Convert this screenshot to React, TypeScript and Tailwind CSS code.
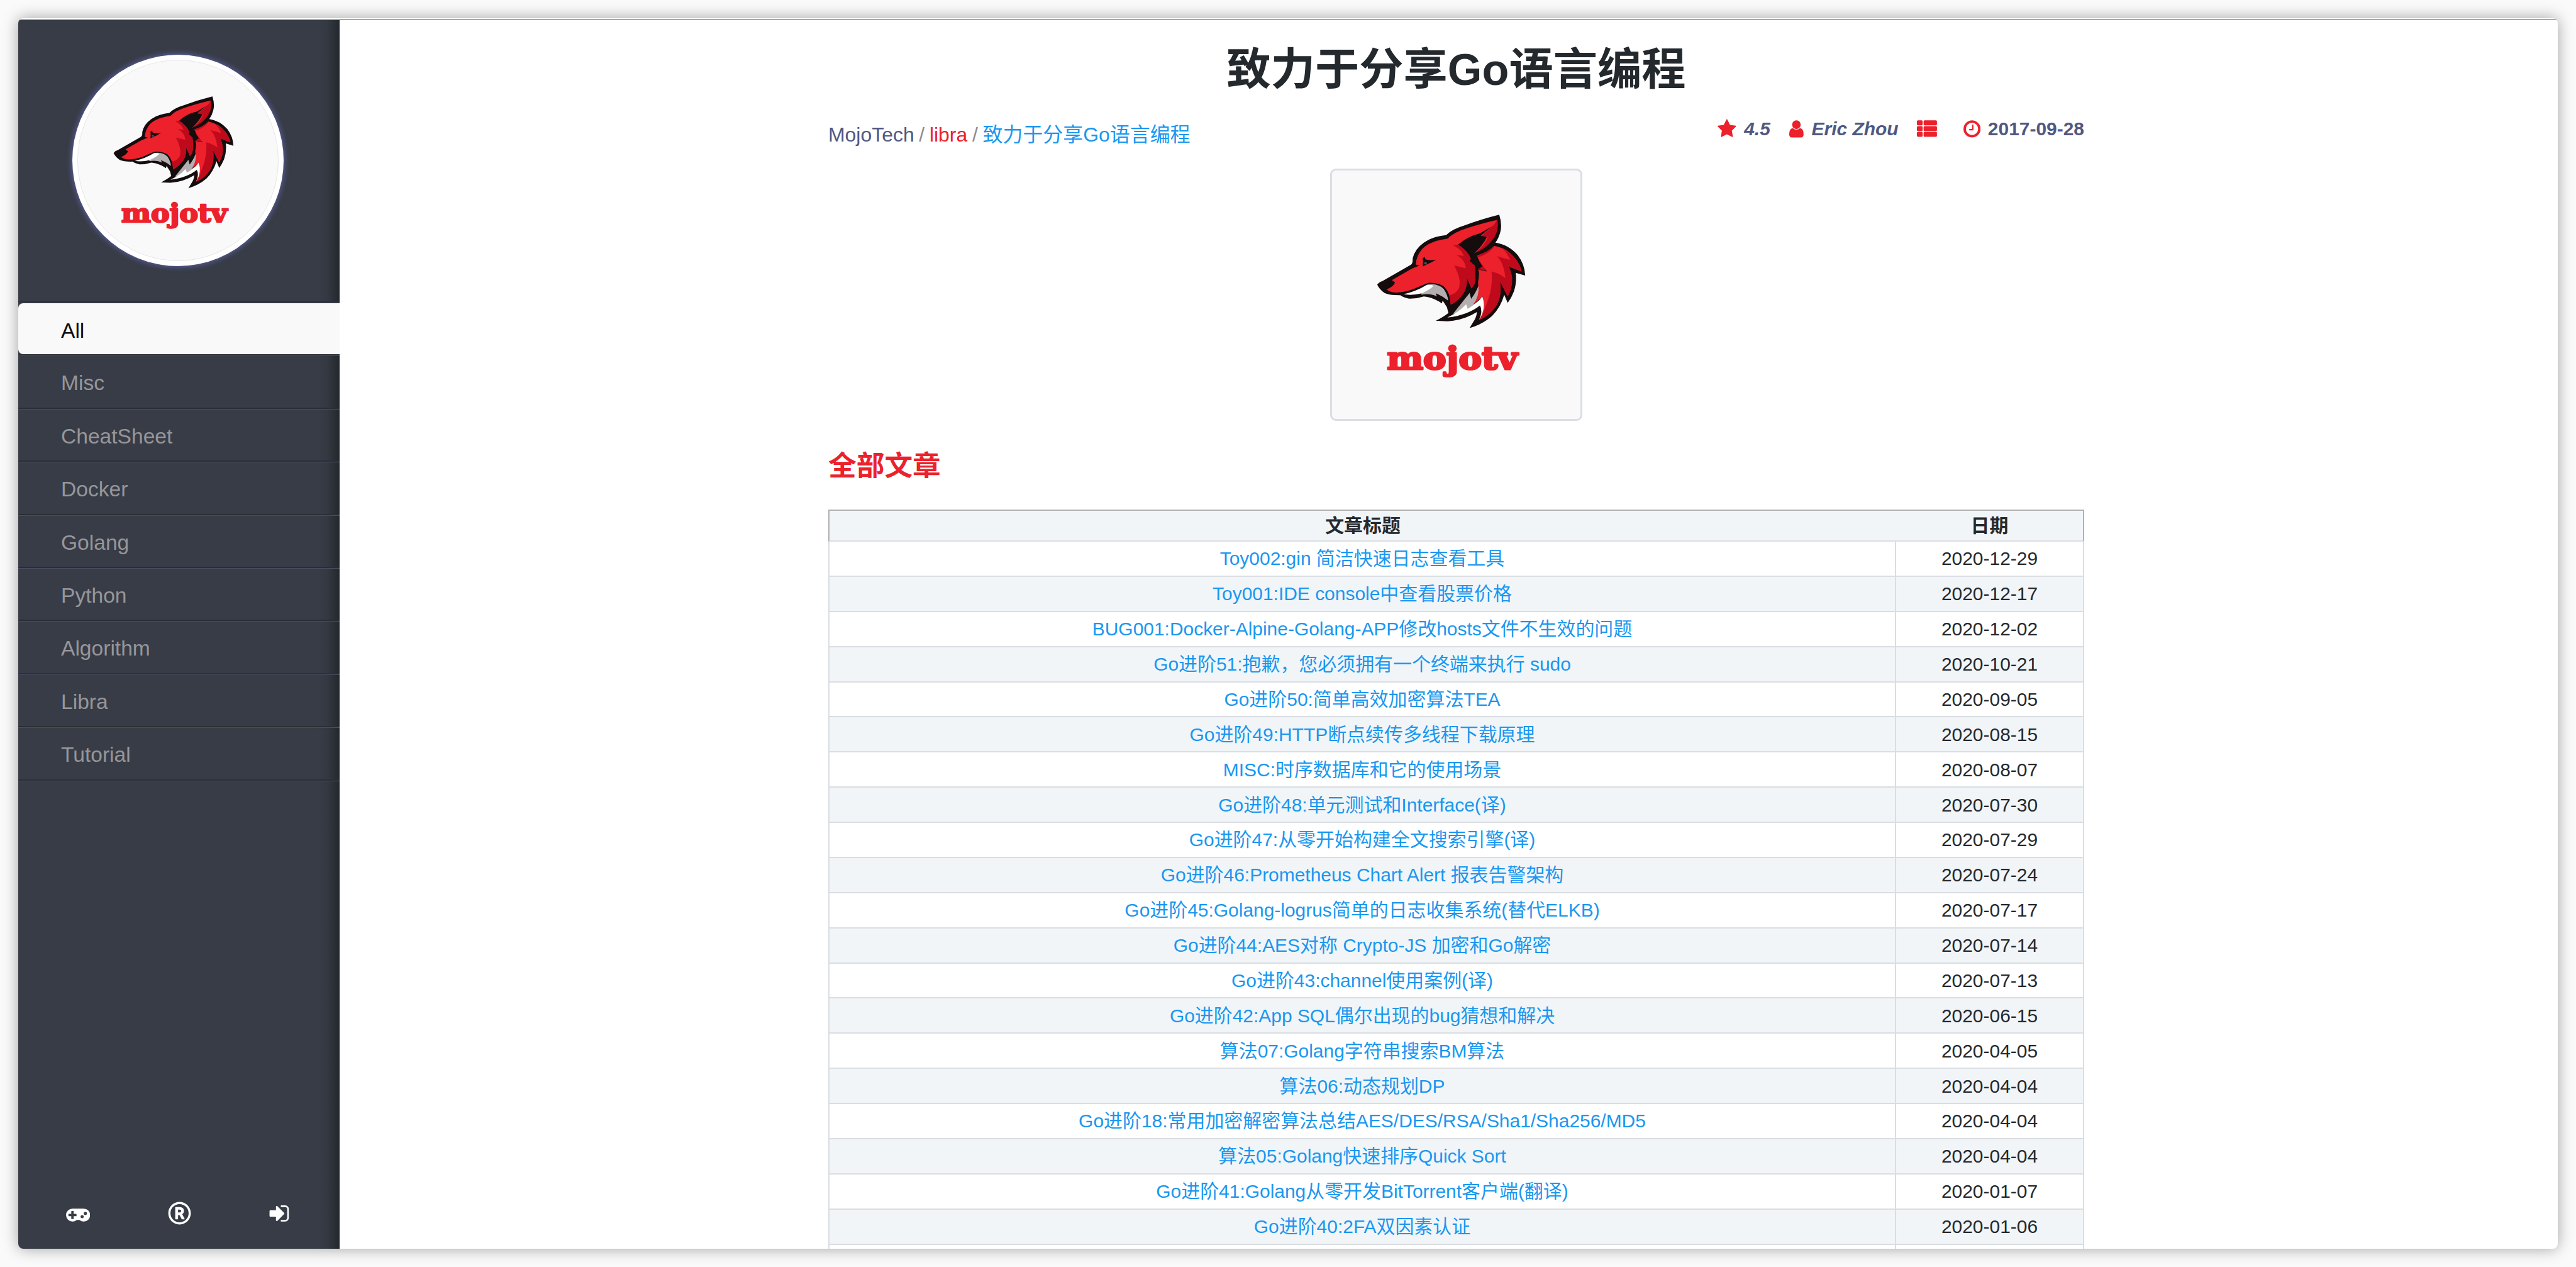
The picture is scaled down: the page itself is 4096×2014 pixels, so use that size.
import React from "react";
import { FaRegRegistered } from "react-icons/fa";

const NAV = ["All", "Misc", "CheatSheet", "Docker", "Golang", "Python", "Algorithm", "Libra", "Tutorial"];

const ARTICLES: [string, string][] = [
  ["Toy002:gin 简洁快速日志查看工具", "2020-12-29"],
  ["Toy001:IDE console中查看股票价格", "2020-12-17"],
  ["BUG001:Docker-Alpine-Golang-APP修改hosts文件不生效的问题", "2020-12-02"],
  ["Go进阶51:抱歉，您必须拥有一个终端来执行 sudo", "2020-10-21"],
  ["Go进阶50:简单高效加密算法TEA", "2020-09-05"],
  ["Go进阶49:HTTP断点续传多线程下载原理", "2020-08-15"],
  ["MISC:时序数据库和它的使用场景", "2020-08-07"],
  ["Go进阶48:单元测试和Interface(译)", "2020-07-30"],
  ["Go进阶47:从零开始构建全文搜索引擎(译)", "2020-07-29"],
  ["Go进阶46:Prometheus Chart Alert 报表告警架构", "2020-07-24"],
  ["Go进阶45:Golang-logrus简单的日志收集系统(替代ELKB)", "2020-07-17"],
  ["Go进阶44:AES对称 Crypto-JS 加密和Go解密", "2020-07-14"],
  ["Go进阶43:channel使用案例(译)", "2020-07-13"],
  ["Go进阶42:App SQL偶尔出现的bug猜想和解决", "2020-06-15"],
  ["算法07:Golang字符串搜索BM算法", "2020-04-05"],
  ["算法06:动态规划DP", "2020-04-04"],
  ["Go进阶18:常用加密解密算法总结AES/DES/RSA/Sha1/Sha256/MD5", "2020-04-04"],
  ["算法05:Golang快速排序Quick Sort", "2020-04-04"],
  ["Go进阶41:Golang从零开发BitTorrent客户端(翻译)", "2020-01-07"],
  ["Go进阶40:2FA双因素认证", "2020-01-06"],
  ["", ""],
];

function Glyph({ d, box, className }: { d: string; box: string; className: string }) {
  return (
    <svg viewBox={box} className={className} fill="currentColor" aria-hidden="true">
      <path d={d} />
    </svg>
  );
}

const STAR =
  "M1728 647q0 22-26 48l-363 354 86 500q1 7 1 20 0 21-10.5 35.5t-30.5 14.5q-19 0-40-12l-449-236-449 236q-22 12-40 12-21 0-31.500-14.500t-10.500-35.500q0-6 2-20l86-500-364-354q-25-27-25-48 0-37 56-46l502-73 225-455q19-41 49-41t49 41l225 455 502 73q56 9 56 46z";
const USER =
  "M1536 1399q0 109-62.5 187t-150.5 78h-854q-88 0-150.500-78t-62.500-187q0-85 8.500-160.500t31.500-152 58.500-131 94-89 134.500-34.500q131 128 313 128t313-128q76 0 134.500 34.500t94 89 58.500 131 31.500 152 8.500 160.500zm-256-887q0 159-112.500 271.500t-271.500 112.500-271.500-112.500-112.500-271.500 112.500-271.500 271.500-112.500 271.500 112.500 112.500 271.500z";
const CLOCK =
  "M1024 544v448q0 14-9 23t-23 9h-320q-14 0-23-9t-9-23v-64q0-14 9-23t23-9h224v-352q0-14 9-23t23-9h64q14 0 23 9t9 23zm416 352q0-148-73-273t-198-198-273-73-273 73-198 198-73 273 73 273 198 198 273 73 273-73 198-198 73-273zm224 0q0 209-103 385.500t-279.500 279.500-385.500 103-385.500-103-279.500-279.500-103-385.500 103-385.500 279.500-279.500 385.500-103 385.500 103 279.500 279.500 103 385.500z";
const GAMEPAD =
  "M832 1088v-128q0-14-9-23t-23-9h-192v-192q0-14-9-23t-23-9h-128q-14 0-23 9t-9 23v192h-192q-14 0-23 9t-9 23v128q0 14 9 23t23 9h192v192q0 14 9 23t23 9h128q14 0 23-9t9-23v-192h192q14 0 23-9t9-23zm576 64q0-53-37.500-90.500t-90.500-37.500-90.500 37.500-37.500 90.500 37.500 90.500 90.500 37.500 90.500-37.500 37.500-90.500zm256-256q0-53-37.500-90.500t-90.500-37.500-90.500 37.500-37.500 90.500 37.500 90.500 90.500 37.500 90.500-37.500 37.500-90.500zm256 128q0 212-150 362t-362 150q-192 0-338-128h-220q-146 128-338 128-212 0-362-150t-150-362 150-362 362-150h896q212 0 362 150t150 362z";
const SIGN_IN =
  "M1312 896q0 26-19 45l-544 544q-19 19-45 19t-45-19-19-45v-288h-448q-26 0-45-19t-19-45v-384q0-26 19-45t45-19h448v-288q0-26 19-45t45-19 45 19l544 544q19 19 19 45zm352-352v704q0 119-84.500 203.500t-203.500 84.500h-320q-13 0-22.500-9.500t-9.500-22.500q0-4-1-20t-.5-26.500 3-23.500 10-19.500 20.500-6.500h320q66 0 113-47t47-113v-704q0-66-47-113t-113-47h-312l-11.500-1-11.500-3-8-5.500-7-9-2-13.500q0-4-1-20t-.5-26.500 3-23.500 10-19.500 20.500-6.500h320q119 0 203.500 84.500t84.500 203.500z";

function ThList({ className }: { className: string }) {
  return (
    <svg viewBox="0 0 1792 1792" className={className} fill="currentColor" aria-hidden="true">
      {[128, 640, 1152].map((y) => (
        <React.Fragment key={y}>
          <rect x="0" y={y} width="512" height="448" rx="96" />
          <rect x="600" y={y} width="1192" height="448" rx="96" />
        </React.Fragment>
      ))}
    </svg>
  );
}

/* Fox head mascot with the wordmark below it */
function FoxLogo({ box, className }: { box: string; className: string }) {
  return (
    <svg viewBox={box} className={className}>
      <g transform="scale(0.38268 0.34438)">
        <path
          fill="#140c0d"
          d="M376 716 Q386 700 402 696 L550 602 Q562 594 560 566 Q570 512 618 474 Q664 438 734 430 Q764 396 830 374 Q916 338 1010 312 Q1026 368 1016 410 Q1008 446 990 474 Q1060 486 1106 546 Q1142 598 1145 664 L1096 648 Q1102 704 1086 756 Q1074 792 1054 822 L1036 774 Q1018 846 972 898 Q922 946 856 967 L876 930 Q892 904 894 874 Q824 922 742 928 L680 925 Q722 902 746 880 L738 846 L716 808 L712 824 Q660 786 618 784 Q580 798 542 797 Q512 790 496 777 Q440 778 414 764 Q386 742 376 716Z"
        />
        <path
          fill="#ec212b"
          d="M424 744 Q462 728 468 704 L452 690 L556 624 L596 606 L576 600 Q580 548 608 512 Q650 464 742 450 Q772 414 842 390 Q926 360 1000 342 Q1008 400 986 432 Q950 500 880 535 L798 486 Q846 526 862 566 L856 580 L882 606 Q892 680 880 716 L866 738 L842 676 Q846 750 806 790 Q786 818 758 832 Q756 762 722 726 Q690 704 640 706 Q604 722 560 744 Q516 760 478 762 Q442 762 424 744Z"
        />
        <path
          fill="#bf0a1c"
          d="M798 486 Q850 524 862 566 L856 580 L882 606 Q892 680 880 716 L866 738 L842 676 Q846 750 806 790 Q786 818 758 832 Q756 790 748 776 Q780 776 800 738 Q816 690 776 606 L836 622 Q834 574 788 546 L826 550 Q816 514 770 488Z"
        />
        <path fill="#bf0a1c" d="M998 343 Q986 372 974 378 L918 436 L950 438 Q940 490 880 535 Q950 506 986 440 Q1010 390 998 343Z" />
        <path fill="#140c0d" d="M796 486 Q846 436 910 420 L968 382 L914 434 L946 440 Q926 488 880 535 L872 560 Q840 506 796 486Z" />
        <path fill="#140c0d" d="M442 706 L468 700 L462 712 L426 738 L404 726Z" />
        <path fill="#140c0d" d="M624 556 L626 570 Q656 578 682 572 Q656 590 636 598 L612 612 Q616 580 612 564Z" />
        <circle cx="627" cy="593" r="7" fill="#4a525c" />
        <path
          fill="#ec212b"
          d="M894 548 Q950 530 984 492 Q1052 506 1092 564 Q1120 602 1126 640 L1060 612 Q1088 676 1070 744 L1054 784 L1014 696 Q1028 798 980 860 Q946 904 904 920 Q936 850 924 784 L874 832 Q906 764 900 700 Q910 650 900 628 L946 640 L908 584Z"
        />
        <path
          fill="#bf0a1c"
          d="M998 552 L1066 574 Q1056 540 1030 512 Q1080 540 1096 572 Q1120 602 1126 640 L1060 612 Q1088 676 1070 744 L1054 784 L1014 696 Q1028 798 980 860 Q946 904 904 920 Q930 884 936 850 Q980 740 970 640 Q1010 650 1042 678 Q1034 590 998 552Z"
        />
        <path fill="#bf0a1c" d="M894 548 Q950 530 984 492 L976 508 Q946 544 898 558 L922 606 L946 636 L900 626 L922 612Z" />
        <path fill="#b5aeb0" d="M770 884 L856 764 L864 798 Q888 764 902 724 Q908 782 874 832 L900 812 L840 880Z" />
        <path fill="#ffffff" d="M740 906 Q800 876 838 830 L846 856 Q900 820 922 784 Q944 850 906 920 Q926 868 910 836 Q848 892 740 906Z" />
        <path fill="#b5aeb0" d="M606 760 Q650 730 636 716 Q690 706 722 742 Q744 780 744 808 Q716 782 680 766 L686 784 Q650 764 606 774Z" />
        <path fill="#ffffff" d="M512 772 Q580 754 634 717 Q672 716 666 726 Q650 744 608 766 Q560 780 512 772Z" />
      </g>
      <text
        x="163"
        y="415.5"
        textLength="260"
        lengthAdjust="spacingAndGlyphs"
        fill="#ec212b"
        stroke="#ec212b"
        strokeWidth="4"
        strokeLinejoin="round"
        className="font-['DejaVu_Serif'] text-[64px] font-bold"
      >
        mojotv
      </text>
    </svg>
  );
}

function Sidebar() {
  return (
    <aside className="flex w-[511px] shrink-0 flex-col bg-[linear-gradient(to_left,#23272d_0px,#2a2e35_8px,#343841_19px,#383c46_34px)]">
      <div className="flex h-[450px] flex-col border-b border-[#484d63]">
        <div className="flex flex-1 border-b-2 border-[#2b2e36] pt-[55px] pl-[86px]">
          <div className="size-[336px] rounded-full bg-white p-[8px] shadow-[0_0_10px_1px_rgba(105,112,200,0.75)]">
            <div className="size-[320px] overflow-hidden rounded-full border border-[#e6e6e6] bg-[#f9f9f9]">
              <FoxLogo box="56.5 19.2 491 491" className="size-full" />
            </div>
          </div>
        </div>
      </div>
      <nav className="flex flex-col text-[33.600px]">
        {NAV.map((name, i) => (
          <div key={name} className="h-[84.4px] border-b border-[#484d63]">
            <div className="h-full border-b-2 border-[#2b2e36]">
              <a
                className={
                  i === 0
                    ? "flex h-full items-center rounded-l-[8px] bg-[#f9f9f9] pt-[6px] pl-[68px] text-[#140c0d]"
                    : "flex h-full items-center pt-[5px] pl-[68px] text-[#96969a]"
                }
              >
                {name}
              </a>
            </div>
          </div>
        ))}
      </nav>
      <div className="mt-auto flex items-center pb-[38px] pl-[76px] text-white">
        <Glyph d={GAMEPAD} box="0 0 1920 1792" className="h-[35.800px] w-[38.400px]" />
        <FaRegRegistered className="ml-[124px] size-[37px]" />
        <Glyph d={SIGN_IN} box="0 0 1792 1792" className="ml-[122px] size-[35.800px]" />
      </div>
    </aside>
  );
}

function Meta() {
  return (
    <div className="flex h-[40px] items-center text-[29.94px] leading-[40px] font-bold text-[#505881]">
      <Glyph d={STAR} box="64 0 1664 1792" className="h-[31.900px] w-[29.700px] text-[#ec212b]" />
      <span className="ml-[13px] italic">4.5</span>
      <Glyph d={USER} box="256 0 1280 1792" className="ml-[30px] h-[31.900px] w-[22.800px] text-[#ec212b]" />
      <span className="ml-[13px] italic">Eric Zhou</span>
      <ThList className="ml-[29px] size-[31.900px] text-[#ec212b]" />
      <Glyph d={CLOCK} box="128 0 1536 1792" className="ml-[42px] h-[31.900px] w-[27.300px] text-[#ec212b]" />
      <span className="ml-[12px]">2017-09-28</span>
    </div>
  );
}

function ArticleTable() {
  return (
    <div className="mt-[39px] text-[29.94px] leading-[40px] text-[#24292e]">
      <div className="grid h-[51px] grid-cols-[1696px_1fr] items-center border-2 border-[#b0b0b3] border-b-[#dadde1] bg-[#f1f5f8] text-center font-bold">
        <div>文章标题</div>
        <div>日期</div>
      </div>
      {ARTICLES.map(([title, date], i) => (
        <div
          key={i}
          className={
            i % 2 === 0
              ? "grid h-[55.890px] grid-cols-[1696px_1fr] border-x-2 border-b-2 border-[#dadde1] bg-white text-center"
              : "grid h-[55.890px] grid-cols-[1696px_1fr] border-x-2 border-b-2 border-[#dadde1] bg-[#f1f5f8] text-center"
          }
        >
          <a className="flex items-center justify-center border-r-2 border-[#dadde1] pt-[1px] text-[#1a97f0]">{title}</a>
          <div className="flex items-center justify-center pt-[1px]">{date}</div>
        </div>
      ))}
    </div>
  );
}

export default function App() {
  return (
    <div className="h-[2014px] w-[4096px] overflow-hidden bg-[#fafafa] p-[29px] font-['Liberation_Sans','Noto_Sans_CJK_SC',sans-serif]">
      <div className="flex h-[1956px] w-[4038px] flex-col overflow-hidden rounded-[8px] bg-white pt-[1px] shadow-[0_0_24px_rgba(0,0,0,0.36)]">
        <div className="h-[2px] shrink-0 bg-[#aaa6aa]" />
        <div className="flex h-[1953px]">
          <Sidebar />
          <main className="flex-1 overflow-hidden pl-[777px]">
            <div className="w-[1997px]">
              <h1 className="pt-[39px] text-center text-[70.26px] leading-[80px] font-bold text-[#24292e]">
                致力于分享Go语言编程
              </h1>
              <div className="mt-[34px] flex h-[49px] items-start justify-between">
                <div className="mt-[9px] text-[31.94px] leading-[40px] [word-spacing:-1.200px] text-[#8c8c8c]">
                  <a className="text-[#505881]">MojoTech</a> / <a className="text-[#ec212b]">libra</a> /{" "}
                  <a className="text-[#1a97f0]">致力于分享Go语言编程</a>
                </div>
                <Meta />
              </div>
              <div className="mx-auto mt-[34px] size-[401px] rounded-[9px] border-[3px] border-[#dadee4] bg-[#f9f9f9]">
                <FoxLogo box="54 19.7 494 494" className="size-full" />
              </div>
              <h2 className="mt-[42px] text-[44.7px] leading-[60px] font-bold text-[#ec212b]">全部文章</h2>
              <ArticleTable />
            </div>
          </main>
        </div>
      </div>
    </div>
  );
}
